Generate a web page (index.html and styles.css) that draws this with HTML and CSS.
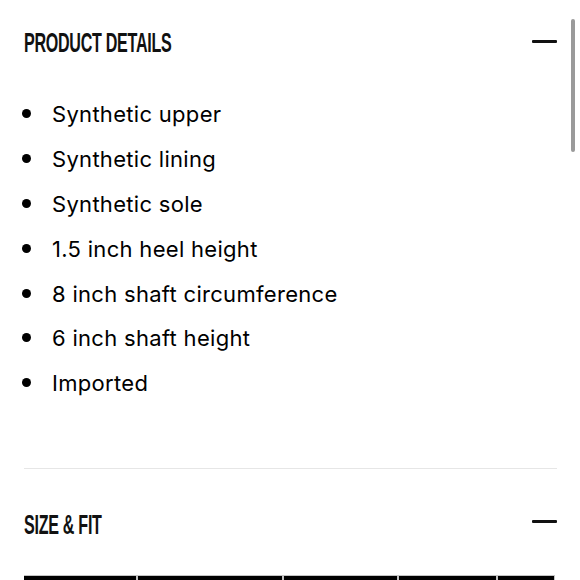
FILE: index.html
```html
<!DOCTYPE html>
<html lang="en">
<head>
<meta charset="utf-8">
<title>Product Details</title>
<link rel="stylesheet" href="styles.css">
</head>
<body>
<main class="page">
  <section class="acc acc-details">
    <header class="acc-head">
      <h2 class="acc-title">PRODUCT DETAILS</h2>
      <span class="minus" aria-hidden="true"></span>
    </header>
    <ul class="bullets">
      <li>Synthetic upper</li>
      <li>Synthetic lining</li>
      <li>Synthetic sole</li>
      <li>1.5 inch heel height</li>
      <li>8 inch shaft circumference</li>
      <li>6 inch shaft height</li>
      <li>Imported</li>
    </ul>
  </section>
  <section class="acc acc-size">
    <header class="acc-head">
      <h2 class="acc-title">SIZE &amp; FIT</h2>
      <span class="minus" aria-hidden="true"></span>
    </header>
    <div class="size-table">
      <div class="cell c1"></div>
      <div class="cell c2"></div>
      <div class="cell c3"></div>
      <div class="cell c4"></div>
      <div class="cell c5"></div>
    </div>
  </section>
  <div class="scrollbar" aria-hidden="true"></div>
</main>
</body>
</html>
```
FILE: styles.css
```css
html, body {
  margin: 0;
  padding: 0;
  background: #ffffff;
  overflow: hidden;
}
.page {
  width: 580px;
  height: 580px;
  padding: 0 23px 0 24px;
  box-sizing: border-box;
  font-family: Inter, "Noto Sans", "Liberation Sans", sans-serif;
  color: #000;
}
.acc-head {
  display: flex;
  align-items: center;
  justify-content: space-between;
  height: 86px;
}
.acc-title {
  margin: 0;
  font-family: "Liberation Sans", Arial, sans-serif;
  font-weight: 700;
  font-size: 28px;
  line-height: 28px;
  letter-spacing: -0.5px;
  transform: scaleX(0.575);
  transform-origin: left center;
  white-space: nowrap;
  color: #111;
}
.minus {
  display: block;
  width: 25px;
  height: 3px;
  background: #111;
  border-radius: 1px;
  margin-top: -3px;
}
.bullets {
  list-style: none;
  margin: 0;
  padding: 6px 0 0;
  border-bottom: 1px solid #e6e6e6;
  height: 376px;
}
.bullets li {
  display: flex;
  align-items: center;
  height: 44.8px;
  font-size: 22px;
  letter-spacing: 0.3px;
  color: #000;
}
.bullets li::before {
  content: "";
  width: 9px;
  height: 9px;
  border-radius: 50%;
  background: #000;
  margin: -1px 21px 0 -2px;
  flex: none;
}
.acc-size {
  padding-top: 13px;
}
.acc-size .minus {
  margin-top: -7px;
}
.size-table {
  display: flex;
  gap: 2px;
  margin-top: 7px;
  margin-right: 2px;
  padding-top: 1px;
  background: #c4c4c4;
  height: 10px;
}
.cell {
  background: #000;
}
.c1 { width: 112px; }
.c2 { width: 144px; }
.c3 { width: 113px; }
.c4 { width: 97px; }
.c5 { width: 56px; }
.scrollbar {
  position: absolute;
  left: 571px;
  top: 19px;
  width: 4px;
  height: 133px;
  border-radius: 2px;
  background: #9a9a9a;
}
```
